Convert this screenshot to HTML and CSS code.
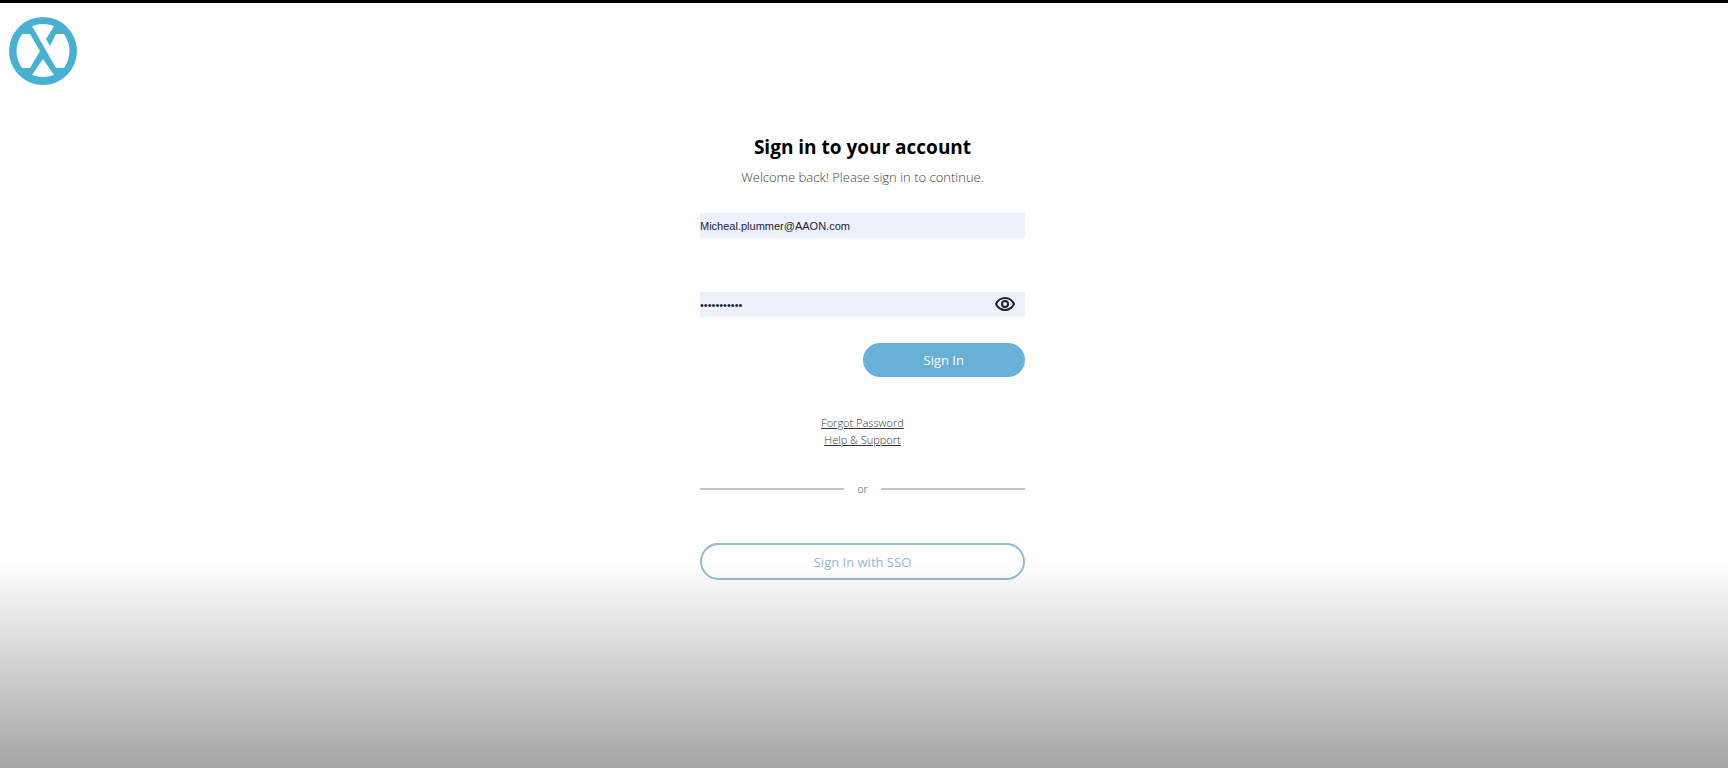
FILE: index.html
```html
<!DOCTYPE html>
<html lang="en">
<head>
  <meta charset="UTF-8" />
  <meta name="viewport" content="width=device-width, initial-scale=1.0" />
  <title>Sign in to your account</title>
  <link rel="stylesheet" href="styles.css">
</head>
<body>

  <header class="header">
    <svg class="logo" viewBox="0 0 68 68" role="img" aria-label="Logo">
      <circle cx="34" cy="34" r="34" fill="#48b1d3" />
      <g fill="#fff">
        <path d="M13 17 H21 L31 34 L21 51 H13 Q2 34 13 17 Z" />
        <path d="M23 9 Q34 5 45 9 L37 22 L41 29 L47 17 H55 Q66 34 55 51 H47 Z" />
        <path d="M34 42 L45 58 Q34 62 23 58 Z" />
      </g>
    </svg>
  </header>

  <main class="login">
    <h1 class="title">Sign in to your account</h1>
    <p class="subtitle">Welcome back! Please sign in to continue.</p>

    <form id="loginForm" class="login-form">
      <input class="field" type="email" id="email" value="Micheal.plummer@AAON.com" aria-label="Email" required />

      <div class="password-field">
        <input class="field" type="password" id="password" value="password123" aria-label="Password" required />
        <button type="button" id="togglePassword" class="toggle" aria-label="Show password">
          <svg viewBox="0 0 20 16" fill="none" stroke="#1c2233" stroke-width="2">
            <path d="M1 8 Q4 2 10 2 T19 8 Q16 14 10 14 T1 8 Z" />
            <circle cx="10" cy="8" r="3" />
          </svg>
        </button>
      </div>

      <button type="submit" class="btn-primary">Sign In</button>
    </form>

    <nav class="links">
      <a href="#">Forgot Password</a>
      <a href="#">Help &amp; Support</a>
    </nav>

    <div class="divider">or</div>

    <button type="button" class="btn-outline">Sign In with SSO</button>
  </main>

  <div class="shade"></div>

  <script>
    document.getElementById('togglePassword').addEventListener('click', function () {
      const password = document.getElementById('password');
      password.type = password.type === 'password' ? 'text' : 'password';
    });

    document.getElementById('loginForm').addEventListener('submit', function (e) {
      e.preventDefault();
    });
  </script>

</body>
</html>
```
FILE: styles.css
```css
* {
  box-sizing: border-box;
}
body {
  font-family: 'Open Sans', 'Noto Sans', sans-serif;
  background-color: #fefefe;
  border-top: 3px solid #000;
  min-height: 100vh;
  margin: 0;
  padding-right: 3px;
}
.header {
  padding: 14px 9px 0;
}
.logo {
  display: block;
  width: 68px;
  height: 68px;
}
.login {
  display: flex;
  flex-direction: column;
  width: 90%;
  max-width: 325px;
  margin: 48px auto 0;
  text-align: center;
}
.title {
  color: #000;
  font-size: 19px;
  line-height: 28px;
  font-weight: 700;
  margin: 0 0 6px;
}
.subtitle {
  color: #444;
  font-size: 13px;
  line-height: 20px;
  font-weight: 300;
  margin: 0;
}
.login-form {
  display: flex;
  flex-direction: column;
  margin-top: 26px;
}
.field {
  display: block;
  width: 100%;
  height: 25px;
  padding: 0;
  border: none;
  background-color: #edf1fc;
  color: #1c2233;
  font-family: 'Liberation Sans', Arial, sans-serif;
  font-size: 11px;
}
.field:focus {
  outline: none;
}
.password-field {
  position: relative;
  margin-top: 54px;
}
.toggle {
  position: absolute;
  top: 4px;
  right: 10px;
  width: 20px;
  height: 16px;
  padding: 0;
  border: none;
  background: none;
  cursor: pointer;
}
.toggle svg {
  display: block;
}
.btn-primary {
  align-self: flex-end;
  width: 50%;
  height: 34px;
  margin-top: 26px;
  border: none;
  border-radius: 17px;
  background-color: #69b0d9;
  color: #fff;
  font-family: inherit;
  font-size: 13px;
  cursor: pointer;
}
.links {
  display: flex;
  flex-direction: column;
  align-items: center;
  margin-top: 37px;
}
.links a {
  color: #333;
  font-size: 11px;
  line-height: 17px;
  font-weight: 300;
}
.divider {
  display: flex;
  align-items: center;
  gap: 13px;
  margin-top: 33px;
  color: #888;
  font-size: 10px;
  line-height: 16px;
}
.divider::before,
.divider::after {
  content: '';
  flex: 1;
  height: 2px;
  background-color: #c4c4c4;
}
.btn-outline {
  height: 37px;
  margin-top: 46px;
  border: 2px solid #8dbfd0;
  border-radius: 19px;
  background-color: #fefefe;
  color: #8fb9d3;
  font-family: inherit;
  font-size: 13px;
  cursor: pointer;
}
.shade {
  position: fixed;
  left: 0;
  right: 0;
  bottom: 0;
  height: 204px;
  background: linear-gradient(rgba(0, 0, 0, 0), rgba(0, 0, 0, 0.35));
  pointer-events: none;
}
```
